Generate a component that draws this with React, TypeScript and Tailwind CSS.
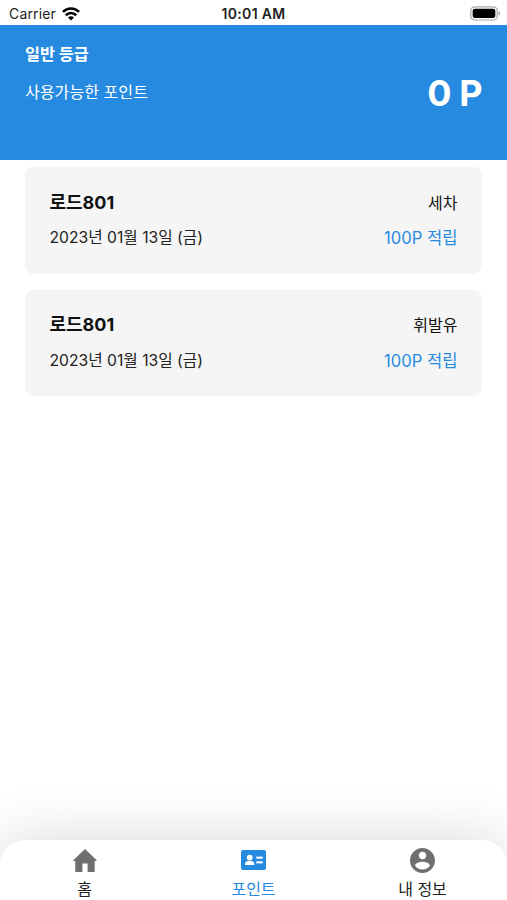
import { ReactNode } from "react";

type PointHistory = {
  id: number;
  store: string;
  date: string;
  category: string;
  amount: string;
};

const histories: PointHistory[] = [
  { id: 1, store: "로드801", date: "2023년 01월 13일 (금)", category: "세차", amount: "100P 적립" },
  { id: 2, store: "로드801", date: "2023년 01월 13일 (금)", category: "휘발유", amount: "100P 적립" },
];

const WifiIcon = () => (
  <svg width="18" height="14" viewBox="0 0 18 14" fill="none" stroke="#000" strokeWidth="2.6">
    <path d="M0.9 4.9C5.5 0.3 12.5 0.3 17.1 4.9" />
    <path d="M3.8 8.2C6.8 5.3 11.2 5.3 14.2 8.2" />
    <path d="M9 13.4L6 10.5C7.8 8.9 10.2 8.9 12 10.5Z" fill="#000" stroke="none" />
  </svg>
);

const BatteryIcon = () => (
  <svg width="31" height="15" viewBox="0 0 31 15">
    <rect x="0.8" y="0.8" width="26.4" height="13.2" rx="3.8" fill="#fff" stroke="#a6a6a6" strokeWidth="1.2" />
    <rect x="2.7" y="2.7" width="22.6" height="9.4" rx="2" fill="#000" />
    <path d="M28.5 5.2C30.7 6 30.7 8.8 28.5 9.6Z" fill="#a6a6a6" />
  </svg>
);

const HomeIcon = () => (
  <svg width="24" height="24" viewBox="0 0 24 24" fill="#6f6f6f">
    <path d="M12 1L0.3 12.2Q0 13 0.8 13H2.3V24H9.4V15.6H14.6V24H21.7V13H23.2Q24 13 23.7 12.2Z" />
  </svg>
);

const CardIcon = () => (
  <svg width="25" height="20" viewBox="0 0 25 20">
    <rect width="25" height="20" rx="2" fill="#268ae0" />
    <g fill="#fff">
      <circle cx="8.7" cy="7.6" r="2.9" />
      <path d="M4 15V14C4 11.8 6.4 10.8 8.7 10.8S13.3 11.8 13.3 14V15Z" />
      <rect x="15.3" y="6.6" width="6.4" height="2.1" />
      <rect x="15.3" y="11.3" width="6.4" height="2.1" />
    </g>
  </svg>
);

const AccountIcon = () => (
  <svg width="25" height="25" viewBox="2 2 20 20" fill="#6f6f6f">
    <path d="M12 2C6.48 2 2 6.48 2 12s4.48 10 10 10 10-4.48 10-10S17.52 2 12 2zm0 3c1.66 0 3 1.34 3 3s-1.34 3-3 3-3-1.34-3-3 1.34-3 3-3zm0 14.2c-2.5 0-4.71-1.28-6-3.22.03-1.99 4-3.08 6-3.08 1.99 0 5.97 1.09 6 3.08-1.29 1.94-3.5 3.22-6 3.22z" />
  </svg>
);

const StatusBar = () => (
  <div className="grid h-[25px] grid-cols-3 items-center pt-[2px] text-[14px] text-[#222]">
    <div className="flex items-center gap-[6px] pl-[9px]">
      <span className="tracking-[0.15px]">Carrier</span>
      <WifiIcon />
    </div>
    <span className="text-center text-[14px] font-semibold tracking-[0.3px]">10:01 AM</span>
    <div className="flex justify-end pr-[6px]">
      <BatteryIcon />
    </div>
  </div>
);

const HistoryCard = ({ history }: { history: PointHistory }) => (
  <li className="flex h-[106.5px] flex-col gap-[11.5px] rounded-lg bg-[#f5f5f5] px-[24.5px] pt-[23.5px]">
    <div className="flex items-center justify-between leading-6">
      <span className="text-[18px] font-bold">{history.store}</span>
      <span className="text-[16px]">{history.category}</span>
    </div>
    <div className="flex items-center justify-between leading-6">
      <span className="text-[15.7px] text-[#222]">{history.date}</span>
      <span className="text-[16.6px] text-[#268ae0]">{history.amount}</span>
    </div>
  </li>
);

const TabItem = ({ icon, label, active }: { icon: ReactNode; label: string; active?: boolean }) => (
  <button type="button" className="flex h-full flex-1 flex-col items-center justify-start pt-[7px]">
    <span className="flex h-[26px] shrink-0 items-center">{icon}</span>
    <span className={active ? "mt-[4px] text-[16px] leading-6 text-[#268ae0]" : "mt-[4px] text-[16px] leading-6 text-[#222]"}>
      {label}
    </span>
  </button>
);

export default function App() {
  return (
    <div className="flex h-screen flex-col overflow-hidden bg-white font-['Inter','Noto_Sans_CJK_KR',sans-serif] text-[#111]">
      <StatusBar />

      <header className="h-[135px] bg-[#268ae0] px-[25px] pt-[17px] text-white">
        <p className="text-[16.3px] font-bold leading-6">일반 등급</p>
        <div className="mt-[2px] flex h-[49px] items-center justify-between">
          <span className="text-[16.1px]">사용가능한 포인트</span>
          <span className="text-[36px] font-bold leading-none tracking-[-0.5px]">0 P</span>
        </div>
      </header>

      <main className="flex-1 px-[25px] pt-[7px]">
        <ul className="flex flex-col gap-[16px]">
          {histories.map((history) => (
            <HistoryCard key={history.id} history={history} />
          ))}
        </ul>
      </main>

      <nav className="flex h-[60px] rounded-t-[25px] bg-white shadow-[0_0_60px_rgba(0,0,0,0.16)]">
        <TabItem icon={<HomeIcon />} label="홈" />
        <TabItem icon={<CardIcon />} label="포인트" active />
        <TabItem icon={<AccountIcon />} label="내 정보" />
      </nav>
    </div>
  );
}
